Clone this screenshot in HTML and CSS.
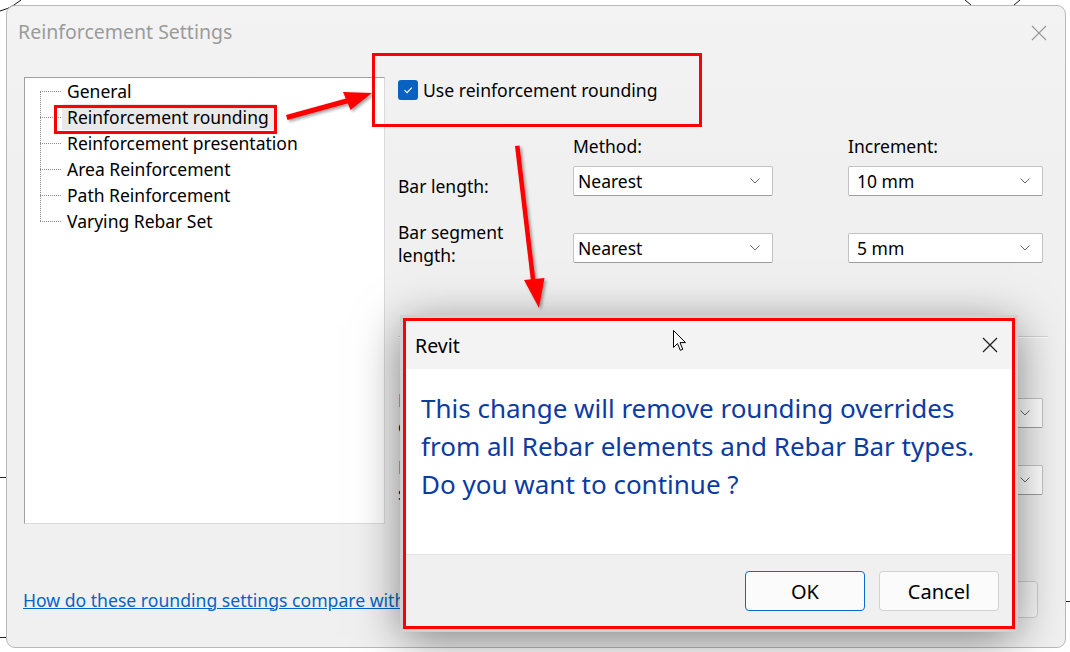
FILE: index.html
```html
<!DOCTYPE html>
<html>
<head>
<meta charset="utf-8">
<link rel="stylesheet" href="styles.css">
</head>
<body>
<div class="screen">
  <svg class="marks" width="1070" height="652" viewBox="0 0 1070 652">
    <path d="M21 0 L14 5 Q8 9 0 11" stroke="#111" stroke-width="1" fill="none"/>
    <path d="M965 0 L971 5 M1020 0 L1014 5" stroke="#111" stroke-width="1" fill="none"/>
    <path d="M0 477.5 H6 M0 637.5 H8 M1064 601.5 H1070" stroke="#222" stroke-width="1"/>
  </svg>
  <div class="win">
    <div class="win-title">
      <span class="title-text">Reinforcement Settings</span>
      <svg class="win-close" width="16" height="16" viewBox="0 0 16 16"><path d="M1 1 L15 15 M15 1 L1 15" stroke="#9a9a9a" stroke-width="1.2"/></svg>
    </div>
    <div class="win-body">
      <div class="tree">
        <ul class="tree-list">
          <li class="tree-item">General</li>
          <li class="tree-item selected">Reinforcement rounding</li>
          <li class="tree-item">Reinforcement presentation</li>
          <li class="tree-item">Area Reinforcement</li>
          <li class="tree-item">Path Reinforcement</li>
          <li class="tree-item last">Varying Rebar Set</li>
        </ul>
      </div>
      <div class="panel">
        <div class="chk-row">
          <span class="chk-box"><svg width="12" height="12" viewBox="0 0 12 12"><path d="M2.5 6.2 L5 8.6 L9.8 3.6" stroke="#fff" stroke-width="1.1" fill="none"/></svg></span>
          <span class="chk-label">Use reinforcement rounding</span>
        </div>
        <div class="round-grid">
          <div></div>
          <div class="col-hdr">Method:</div>
          <div class="col-hdr">Increment:</div>
          <div class="row-lbl low">Bar length:</div>
          <div class="sel method"><span>Nearest</span><svg class="chev" width="10" height="6" viewBox="0 0 10 6"><path d="M0.5 0.5 L5 5 L9.5 0.5" stroke="#666" fill="none"/></svg></div>
          <div class="sel inc"><span>10 mm</span><svg class="chev" width="10" height="6" viewBox="0 0 10 6"><path d="M0.5 0.5 L5 5 L9.5 0.5" stroke="#666" fill="none"/></svg></div>
          <div class="row-lbl two r2">Bar segment<br>length:</div>
          <div class="sel method r2"><span>Nearest</span><svg class="chev" width="10" height="6" viewBox="0 0 10 6"><path d="M0.5 0.5 L5 5 L9.5 0.5" stroke="#666" fill="none"/></svg></div>
          <div class="sel inc r2"><span>5 mm</span><svg class="chev" width="10" height="6" viewBox="0 0 10 6"><path d="M0.5 0.5 L5 5 L9.5 0.5" stroke="#666" fill="none"/></svg></div>
        </div>
        <div class="sep"></div>
        <div class="round-grid lower">
          <div class="row-lbl two">Fabric sheet<br>cut length:</div>
          <div class="sel method"><span></span><svg class="chev" width="10" height="6" viewBox="0 0 10 6"><path d="M0.5 0.5 L5 5 L9.5 0.5" stroke="#666" fill="none"/></svg></div>
          <div class="sel inc"><span></span><svg class="chev" width="10" height="6" viewBox="0 0 10 6"><path d="M0.5 0.5 L5 5 L9.5 0.5" stroke="#666" fill="none"/></svg></div>
          <div class="row-lbl two r2">Fabric sheet<br>segment:</div>
          <div class="sel method r2"><span></span><svg class="chev" width="10" height="6" viewBox="0 0 10 6"><path d="M0.5 0.5 L5 5 L9.5 0.5" stroke="#666" fill="none"/></svg></div>
          <div class="sel inc r2"><span></span><svg class="chev" width="10" height="6" viewBox="0 0 10 6"><path d="M0.5 0.5 L5 5 L9.5 0.5" stroke="#666" fill="none"/></svg></div>
        </div>
      </div>
    </div>
    <div class="win-foot">
      <a class="help-link" href="#">How do these rounding settings compare with</a>
      <div class="foot-btns">
        <span class="win-btn"></span>
        <span class="win-btn"></span>
      </div>
    </div>
  </div>

  <div class="modal">
    <div class="modal-title">
      <span>Revit</span>
      <svg width="16" height="16" viewBox="0 0 16 16"><path d="M1 1 L15 15 M15 1 L1 15" stroke="#222" stroke-width="1.3"/></svg>
    </div>
    <div class="modal-body">
      <p class="modal-msg">This change will remove rounding overrides<br>from all Rebar elements and Rebar Bar types.<br>Do you want to continue ?</p>
    </div>
    <div class="modal-foot">
      <span class="m-btn primary">OK</span>
      <span class="m-btn">Cancel</span>
    </div>
  </div>

  <div class="hl hl-tree"></div>
  <div class="hl hl-check"></div>

  <svg class="arrows" width="1070" height="652" viewBox="0 0 1070 652">
    <defs>
      <filter id="sh" x="-20%" y="-20%" width="140%" height="140%">
        <feDropShadow dx="2" dy="2" stdDeviation="1.5" flood-color="#000" flood-opacity="0.35"/>
      </filter>
    </defs>
    <g filter="url(#sh)" fill="#ff0000" stroke="none">
      <path d="M287.5 120 L351 102.5 L349.5 97.5 L286 115 Z"/>
      <path d="M372 93 L343 92 L350.5 110 Z"/>
      <path d="M515 146 L519.5 145.5 L535.5 281 L531 281.5 Z"/>
      <path d="M539 308 L524 280 L544.5 278 Z"/>
    </g>
  </svg>

  <svg class="cursor" width="14" height="22" viewBox="0 0 14 22">
    <path d="M0.5 0.5 L0.5 17.5 L4.5 13.5 L7.3 20.3 L9.8 19.3 L7 12.6 L12.5 12.6 Z" fill="#fff" stroke="#000" stroke-width="1"/>
  </svg>
</div>
</body>
</html>
```
FILE: styles.css
```css
* { box-sizing: border-box; }
html, body { margin: 0; padding: 0; background: #fff; }
body { font-family: "Noto Sans", "DejaVu Sans", sans-serif; color: #000; }

.screen {
  position: relative;
  width: 1070px;
  height: 652px;
  padding: 5px 4px 4px 6px;
  overflow: hidden;
}
.marks { position: absolute; left: 0; top: 0; }

.win {
  position: relative;
  height: 643px;
  border: 1px solid #b9b9b9;
  border-radius: 9px;
  background: linear-gradient(#f3f3f3, #f0f0f0 160px);
  display: flex;
  flex-direction: column;
  overflow: hidden;
}
.win-title {
  height: 53px;
  flex-shrink: 0;
  display: flex;
  align-items: center;
  justify-content: space-between;
  padding: 0 18px 0 11px;
}
.title-text { font-size: 19.5px; color: #9b9b9b; margin-top: -2px; }

.win-body {
  display: flex;
  padding: 18px 0 0 17px;
  flex-shrink: 0;
}
.tree {
  flex-shrink: 0;
  width: 361px;
  height: 447px;
  background: #fff;
  border-left: 1px solid #a0a0a0;
  border-top: 1px solid #a0a0a0;
  border-right: 1px solid #dadada;
  border-bottom: 1px solid #dadada;
}
.tree-list {
  list-style: none;
  margin: 0;
  padding: 0 0 0 15px;
}
.tree-item {
  position: relative;
  height: 26px;
  line-height: 26px;
  font-size: 17.5px;
  padding-left: 27px;
  white-space: nowrap;
}
.tree-item::before {
  content: "";
  position: absolute;
  left: 0;
  top: 13px;
  width: 21px;
  border-top: 1px dotted #8a8a8a;
}
.tree-item::after {
  content: "";
  position: absolute;
  left: 0;
  top: -13px;
  height: 26px;
  border-left: 1px dotted #8a8a8a;
}
.tree-item:first-child::after { display: none; }
.tree-item.selected {
  background: linear-gradient(to right, transparent 0, transparent 22px, #e9e9e9 22px, #e9e9e9 236px, transparent 236px);
}

.panel {
  flex: 1;
  min-width: 0;
  padding: 3px 0 0 13px;
}
.chk-row {
  display: flex;
  align-items: center;
  height: 20px;
}
.chk-box {
  flex-shrink: 0;
  width: 20px;
  height: 20px;
  border-radius: 3px;
  background: #0a62c0;
  display: flex;
  align-items: center;
  justify-content: center;
}
.chk-label { font-size: 17.6px; margin-left: 5px; white-space: nowrap; }

.round-grid {
  display: grid;
  grid-template-columns: 175px 275px 195px;
  margin-top: 34px;
  align-items: center;
}
.col-hdr {
  font-size: 17.5px;
  line-height: 24px;
  margin-bottom: 8px;
  white-space: nowrap;
}
.row-lbl { font-size: 17.5px; line-height: 30px; white-space: nowrap; }
.row-lbl.low { margin-top: 5px; margin-bottom: -5px; }
.row-lbl.two { line-height: 23px; margin-top: -12px; margin-bottom: -4px; }
.round-grid > .r2 { margin-top: 37px; }
.round-grid > .row-lbl.two.r2 { margin-top: 25px; }

.sel {
  height: 30px;
  background: #fff;
  border: 1px solid #c2c2c2;
  border-bottom-color: #9e9e9e;
  border-radius: 2px;
  display: flex;
  align-items: center;
  justify-content: space-between;
  padding: 0 12px 0 4px;
  font-size: 17.5px;
}
.sel.method { width: 200px; }
.sel.inc { padding-left: 8px; }
.chev { display: block; }

.sep {
  margin-top: 73px;
  width: 650px;
  height: 2px;
  border-top: 1px solid #d2d2d2;
  border-bottom: 1px solid #fff;
}
.round-grid.lower { margin-top: 60px; }
.round-grid.lower .row-lbl.two { line-height: 26px; margin-top: -11px; margin-bottom: -11px; }
.round-grid.lower > .row-lbl.two.r2 { margin-top: 26px; }

.win-foot {
  flex: 1;
  display: flex;
  align-items: center;
  justify-content: space-between;
  padding: 28px 27px 0 16px;
}
.help-link {
  font-size: 17.6px;
  color: #0563c9;
  text-decoration: underline;
  white-space: nowrap;
}
.foot-btns { display: flex; gap: 14px; }
.win-btn {
  width: 120px;
  height: 37px;
  border: 1px solid #cfcfcf;
  border-radius: 4px;
  background: #f7f7f7;
}

/* Revit modal */
.modal {
  position: absolute;
  left: 403px;
  top: 318px;
  width: 612px;
  height: 311px;
  border: 3px solid #ff0000;
  background: #f0f0f0;
  display: flex;
  flex-direction: column;
  box-shadow: 0 0 0 3px #d0d0d0, 0 8px 44px rgba(0, 0, 0, 0.5);
}
.modal-title {
  height: 48px;
  flex-shrink: 0;
  background: #f3f3f3;
  display: flex;
  align-items: center;
  justify-content: space-between;
  padding: 0 14px 0 9px;
  font-size: 19.5px;
}
.modal-body {
  height: 186px;
  flex-shrink: 0;
  background: #fff;
  border-bottom: 1px solid #e2e2e2;
  padding: 20px 0 0 15px;
}
.modal-msg {
  margin: 0;
  font-size: 26px;
  line-height: 38px;
  color: #0c3ba2;
  white-space: nowrap;
}
.modal-foot {
  flex: 1;
  display: flex;
  justify-content: flex-end;
  align-items: flex-start;
  gap: 14px;
  padding: 16px 13px 0 0;
}
.m-btn {
  width: 120px;
  height: 40px;
  display: flex;
  align-items: center;
  justify-content: center;
  background: #fbfbfb;
  border: 1px solid #d2d2d2;
  border-radius: 4px;
  font-size: 20px;
}
.m-btn.primary { border-color: #0a6ad0; }

/* annotations */
.hl {
  position: absolute;
  border: 3px solid #ff0000;
}
.hl-tree { left: 54px; top: 105px; width: 223px; height: 29px; }
.hl-check { left: 372px; top: 53px; width: 330px; height: 74px; }

.arrows { position: absolute; left: 0; top: 0; pointer-events: none; }
.cursor { position: absolute; left: 673px; top: 330px; }
```
